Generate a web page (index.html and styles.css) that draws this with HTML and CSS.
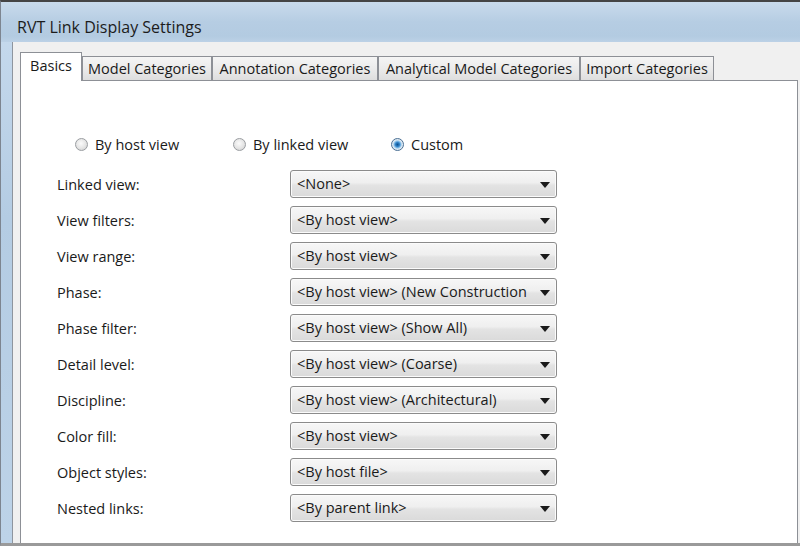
FILE: index.html
```html
<!DOCTYPE html>
<html>
<head>
<meta charset="utf-8">
<title>RVT Link Display Settings</title>
<link rel="stylesheet" href="styles.css">
</head>
<body>
<div class="window">
  <div class="titlebar">RVT Link Display Settings</div>
  <div class="client">
    <div class="tabs">
      <div class="tab active">Basics</div>
      <div class="tab tab-model">Model Categories</div>
      <div class="tab tab-annot">Annotation Categories</div>
      <div class="tab tab-anal">Analytical Model Categories</div>
      <div class="tab tab-import">Import Categories</div>
    </div>
    <div class="panel">
      <div class="radios">
        <div class="radio-item"><span class="radio"></span><span>By host view</span></div>
        <div class="radio-item"><span class="radio"></span><span>By linked view</span></div>
        <div class="radio-item"><span class="radio checked"></span><span>Custom</span></div>
      </div>
      <div class="form">
        <div class="row"><span class="label">Linked view:</span><div class="select"><span class="value">&lt;None&gt;</span><span class="arrow"></span></div></div>
        <div class="row"><span class="label">View filters:</span><div class="select"><span class="value">&lt;By host view&gt;</span><span class="arrow"></span></div></div>
        <div class="row"><span class="label">View range:</span><div class="select"><span class="value">&lt;By host view&gt;</span><span class="arrow"></span></div></div>
        <div class="row"><span class="label">Phase:</span><div class="select"><span class="value">&lt;By host view&gt; (New Construction)</span><span class="arrow"></span></div></div>
        <div class="row"><span class="label">Phase filter:</span><div class="select"><span class="value">&lt;By host view&gt; (Show All)</span><span class="arrow"></span></div></div>
        <div class="row"><span class="label">Detail level:</span><div class="select"><span class="value">&lt;By host view&gt; (Coarse)</span><span class="arrow"></span></div></div>
        <div class="row"><span class="label">Discipline:</span><div class="select"><span class="value">&lt;By host view&gt; (Architectural)</span><span class="arrow"></span></div></div>
        <div class="row"><span class="label">Color fill:</span><div class="select"><span class="value">&lt;By host view&gt;</span><span class="arrow"></span></div></div>
        <div class="row"><span class="label">Object styles:</span><div class="select"><span class="value">&lt;By host file&gt;</span><span class="arrow"></span></div></div>
        <div class="row"><span class="label">Nested links:</span><div class="select"><span class="value">&lt;By parent link&gt;</span><span class="arrow"></span></div></div>
      </div>
    </div>
  </div>
</div>
</body>
</html>
```
FILE: styles.css
```css
html, body {
  margin: 0;
  padding: 0;
}
body {
  font-family: "Open Sans", "Noto Sans", "DejaVu Sans", sans-serif;
  color: #1a1a1a;
  background: #ffffff;
}
.window {
  width: 800px;
  height: 546px;
  box-sizing: border-box;
  border-top: 2px solid #454545;
  border-left: 1px solid #7d8590;
  border-bottom: 3px solid #9a9a9a;
  background: linear-gradient(180deg, #c8dbee 0%, #b4cce3 40%, #bdd3e8 100%);
  display: flex;
  flex-direction: column;
}
.titlebar {
  height: 40px;
  flex: none;
  box-sizing: border-box;
  padding: 10px 0 0 16px;
  line-height: 30px;
  font-size: 16px;
  color: #1c1c1c;
  background: linear-gradient(180deg, #c9dbec 0%, #b6cde3 50%, #b3cbe1 85%, #bcd1e6 100%);
}
.client {
  flex: 1;
  margin-left: 11px;
  border-left: 1px solid #8e959e;
  background: #f0f0f0;
  padding: 10px 2px 0 7px;
  display: flex;
  flex-direction: column;
  min-height: 0;
}
.tabs {
  display: flex;
  align-items: flex-end;
  height: 28px;
  flex: none;
}
.tab {
  flex: none;
  height: 24px;
  box-sizing: border-box;
  border: 1px solid #8d9096;
  border-bottom: none;
  background: linear-gradient(180deg, #f5f5f5 0%, #ebebeb 50%, #dedede 100%);
  font-size: 14.5px;
  line-height: 23px;
  text-align: center;
  white-space: nowrap;
  overflow: hidden;
  color: #1a1a1a;
}
.tab.active {
  width: 62px;
  height: 29px;
  margin-bottom: -1px;
  background: #ffffff;
  line-height: 26px;
  position: relative;
  z-index: 1;
}
.tab-model { width: 130px; }
.tab-annot { width: 166px; }
.tab-anal { width: 202px; }
.tab-import { width: 134px; }
.panel {
  flex: 1;
  background: #ffffff;
  border: 1px solid #8d9096;
  border-bottom: none;
  padding-top: 53px;
  min-height: 0;
}
.radios {
  display: flex;
  height: 20px;
  align-items: center;
  padding-left: 54px;
  font-size: 14.5px;
}
.radio-item {
  width: 158px;
  flex: none;
  display: flex;
  align-items: center;
  gap: 7px;
  white-space: nowrap;
}
.radio {
  width: 13px;
  height: 13px;
  box-sizing: border-box;
  border-radius: 50%;
  border: 1px solid #9a9da1;
  background: radial-gradient(circle at 45% 40%, #fbfbfb 0%, #e4e4e4 55%, #cbcbcb 100%);
  flex: none;
}
.radio.checked {
  border-color: #4a6f94;
  background: radial-gradient(circle at 50% 50%, #0c5290 0px, #2f7fc4 2px, #8cc3ec 3.5px, #d8e6f2 4.5px, #f3f3f3 100%);
}
.form {
  margin-top: 16px;
  display: flex;
  flex-direction: column;
  gap: 8px;
}
.row {
  display: flex;
  align-items: center;
  height: 28px;
  padding-left: 36px;
  font-size: 14.5px;
}
.label {
  width: 233px;
  flex: none;
  white-space: nowrap;
}
.select {
  width: 267px;
  height: 28px;
  box-sizing: border-box;
  border: 1px solid #8b8b8b;
  border-radius: 3px;
  background: linear-gradient(180deg, #f7f7f7 0%, #efefef 45%, #e3e3e3 55%, #dadada 100%);
  box-shadow: inset 0 0 0 1px #fbfbfb;
  display: flex;
  align-items: center;
  flex: none;
}
.value {
  flex: 1;
  min-width: 0;
  overflow: hidden;
  white-space: nowrap;
  padding-left: 6px;
  margin-right: 13px;
  line-height: 26px;
}
.arrow {
  flex: none;
  width: 0;
  height: 0;
  border-left: 5px solid transparent;
  border-right: 5px solid transparent;
  border-top: 6px solid #1a1a1a;
  margin-right: 6px;
  margin-top: 1px;
}
```
